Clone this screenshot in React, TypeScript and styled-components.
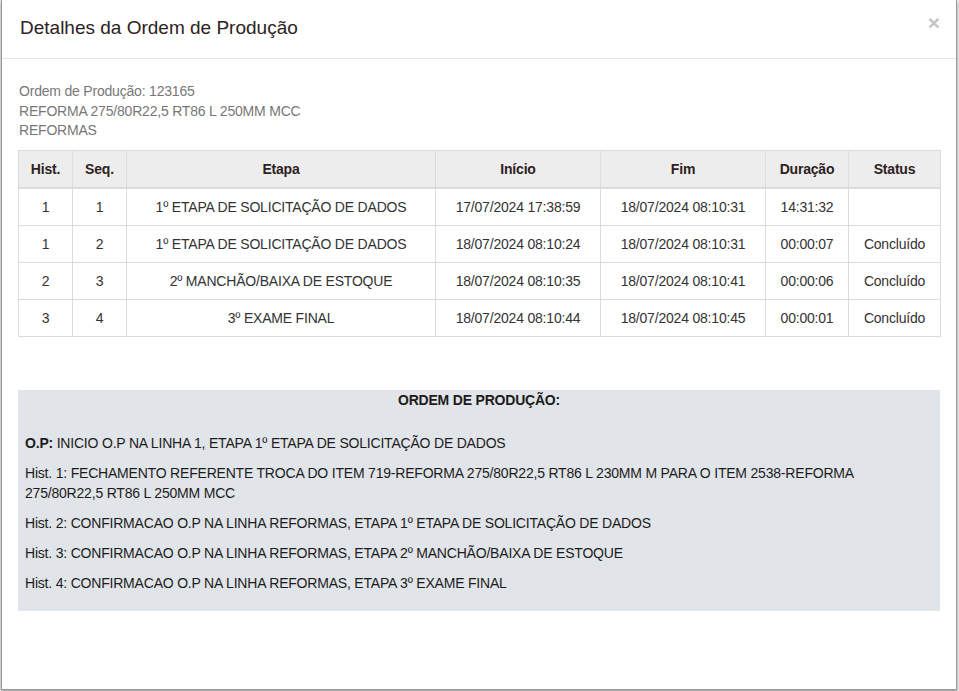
import React from "react";
import styled, { createGlobalStyle } from "styled-components";

const Global = createGlobalStyle`
  html, body { margin: 0; padding: 0; }
  body {
    background: #eaeaea;
    font-family: "Liberation Sans", Arial, sans-serif;
    overflow: hidden;
  }
`;

const Backdrop = styled.div`
  width: 959px;
  height: 691px;
  display: flex;
  align-items: flex-start;
  background: #ececec;
`;

const Modal = styled.div`
  box-sizing: border-box;
  margin-left: 1px;
  width: 956px;
  height: 690px;
  background: #fff;
  border-left: 1px solid #9a9a9a;
  border-right: 1px solid #9a9a9a;
  border-bottom: 1px solid #9a9a9a;
  box-shadow: 0 2px 3px rgba(0, 0, 0, 0.35);
  display: flex;
  flex-direction: column;
`;

const Header = styled.div`
  box-sizing: border-box;
  height: 59px;
  border-bottom: 1px solid #e5e5e5;
  display: flex;
  align-items: center;
  padding: 0 16px 2px 18px;
`;

const Title = styled.h4`
  margin: 0;
  font-size: 19px;
  line-height: 22px;
  font-weight: normal;
  color: #2d2222;
`;

const Close = styled.button`
  margin-left: auto;
  align-self: flex-start;
  margin-top: 12px;
  border: 0;
  background: none;
  padding: 0;
  font-family: "Liberation Sans", Arial, sans-serif;
  font-size: 21px;
  line-height: 21px;
  font-weight: bold;
  color: #c4c4c4;
`;

const Body = styled.div`
  padding: 23px 15px 0 16px;
  letter-spacing: -0.2px;
`;

const Info = styled.div`
  font-size: 14px;
  line-height: 19.5px;
  color: #777;
  padding-left: 1px;
`;

const Table = styled.table`
  margin-top: 9px;
  width: 922px;
  border-collapse: collapse;
  table-layout: fixed;
  font-size: 14px;
  color: #333;
`;

const Th = styled.th`
  background: #ededed;
  border: 1px solid #dcdcdc;
  border-bottom: 2px solid #dcdcdc;
  padding: 8px;
  line-height: 20px;
  font-weight: bold;
  text-align: center;
  color: #2d2222;
`;

const Td = styled.td`
  border: 1px solid #dcdcdc;
  padding: 8px;
  line-height: 20px;
  text-align: center;
  white-space: nowrap;
`;

const Notes = styled.div`
  margin-top: 53px;
  width: 922px;
  box-sizing: border-box;
  background: #e1e4e8;
  padding: 0 7px 8px 7px;
  font-size: 14px;
  line-height: 20px;
  color: #1c1c1c;
`;

const NotesTitle = styled.p`
  margin: 0 0 23px;
  text-align: center;
  font-weight: bold;
`;

const Note = styled.p`
  margin: 0 0 10px;
`;

const cols = [54, 54, 309, 165, 165, 83, 92];
const headers = ["Hist.", "Seq.", "Etapa", "Início", "Fim", "Duração", "Status"];
const rows = [
  ["1", "1", "1º ETAPA DE SOLICITAÇÃO DE DADOS", "17/07/2024 17:38:59", "18/07/2024 08:10:31", "14:31:32", ""],
  ["1", "2", "1º ETAPA DE SOLICITAÇÃO DE DADOS", "18/07/2024 08:10:24", "18/07/2024 08:10:31", "00:00:07", "Concluído"],
  ["2", "3", "2º MANCHÃO/BAIXA DE ESTOQUE", "18/07/2024 08:10:35", "18/07/2024 08:10:41", "00:00:06", "Concluído"],
  ["3", "4", "3º EXAME FINAL", "18/07/2024 08:10:44", "18/07/2024 08:10:45", "00:00:01", "Concluído"],
];

export default function App() {
  return (
    <>
      <Global />
      <Backdrop>
        <Modal>
          <Header>
            <Title>Detalhes da Ordem de Produção</Title>
            <Close>×</Close>
          </Header>
          <Body>
            <Info>
              Ordem de Produção: 123165
              <br />
              REFORMA 275/80R22,5 RT86 L 250MM MCC
              <br />
              REFORMAS
            </Info>
            <Table>
              <colgroup>
                {cols.map((w, i) => (
                  <col key={i} style={{ width: w }} />
                ))}
              </colgroup>
              <thead>
                <tr>
                  {headers.map((h) => (
                    <Th key={h}>{h}</Th>
                  ))}
                </tr>
              </thead>
              <tbody>
                {rows.map((r, i) => (
                  <tr key={i}>
                    {r.map((c, j) => (
                      <Td key={j}>{c}</Td>
                    ))}
                  </tr>
                ))}
              </tbody>
            </Table>
            <Notes>
              <NotesTitle>ORDEM DE PRODUÇÃO:</NotesTitle>
              <Note>
                <b>O.P:</b> INICIO O.P NA LINHA 1, ETAPA 1º ETAPA DE SOLICITAÇÃO DE DADOS
              </Note>
              <Note>
                Hist. 1: FECHAMENTO REFERENTE TROCA DO ITEM 719-REFORMA 275/80R22,5 RT86 L 230MM M PARA O ITEM 2538-REFORMA 275/80R22,5 RT86 L 250MM MCC
              </Note>
              <Note>Hist. 2: CONFIRMACAO O.P NA LINHA REFORMAS, ETAPA 1º ETAPA DE SOLICITAÇÃO DE DADOS</Note>
              <Note>Hist. 3: CONFIRMACAO O.P NA LINHA REFORMAS, ETAPA 2º MANCHÃO/BAIXA DE ESTOQUE</Note>
              <Note>Hist. 4: CONFIRMACAO O.P NA LINHA REFORMAS, ETAPA 3º EXAME FINAL</Note>
            </Notes>
          </Body>
        </Modal>
      </Backdrop>
    </>
  );
}
